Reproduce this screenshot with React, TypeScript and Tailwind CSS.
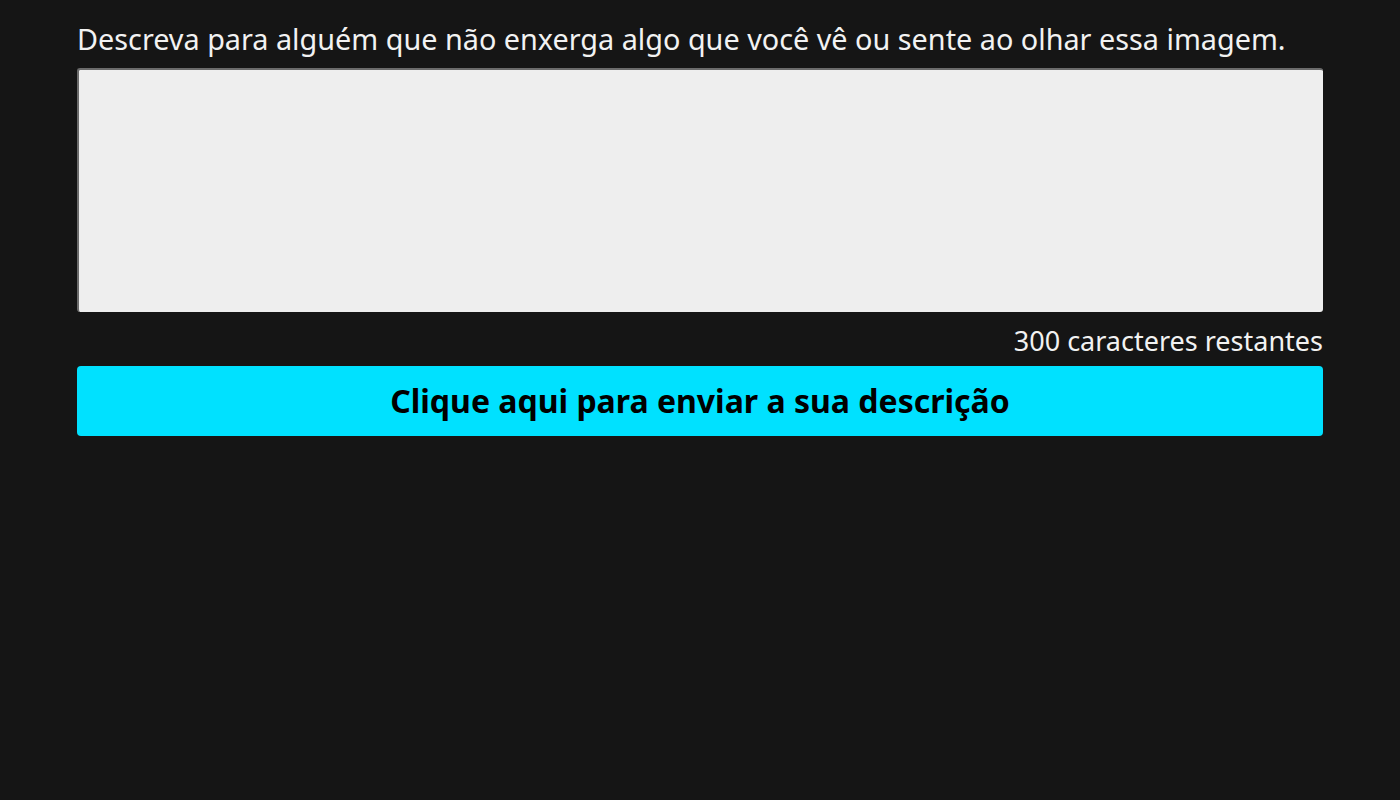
import { useState } from 'react'

const MAX_CHARS = 300

export default function App() {
  const [text, setText] = useState('')

  return (
    <div className="min-h-[800px] bg-[#151515] px-[77px] pt-[19px] font-['Noto_Sans',sans-serif] text-[#f2f2f2]">
      <label htmlFor="descricao" className="block text-[28.8px] leading-[40px]">
        Descreva para alguém que não enxerga algo que você vê ou sente ao olhar essa imagem.
      </label>
      <textarea
        id="descricao"
        value={text}
        maxLength={MAX_CHARS}
        onChange={(event) => setText(event.target.value)}
        className="mt-[9px] block h-[244px] w-full resize-none rounded-[3px] border-t-2 border-l-2 border-t-[#6b6b6b] border-l-[#6b6b6b] bg-[#eeeeee] p-2 text-[22px] text-black outline-none"
      />
      <p className="mt-[10px] text-right text-[27px] leading-[38px]">{MAX_CHARS - text.length} caracteres restantes</p>
      <button
        type="button"
        className="mt-[6px] flex h-[70px] w-full items-center justify-center rounded-[4px] bg-[#00e1ff] text-[32px] font-bold text-black"
      >
        Clique aqui para enviar a sua descrição
      </button>
    </div>
  )
}
